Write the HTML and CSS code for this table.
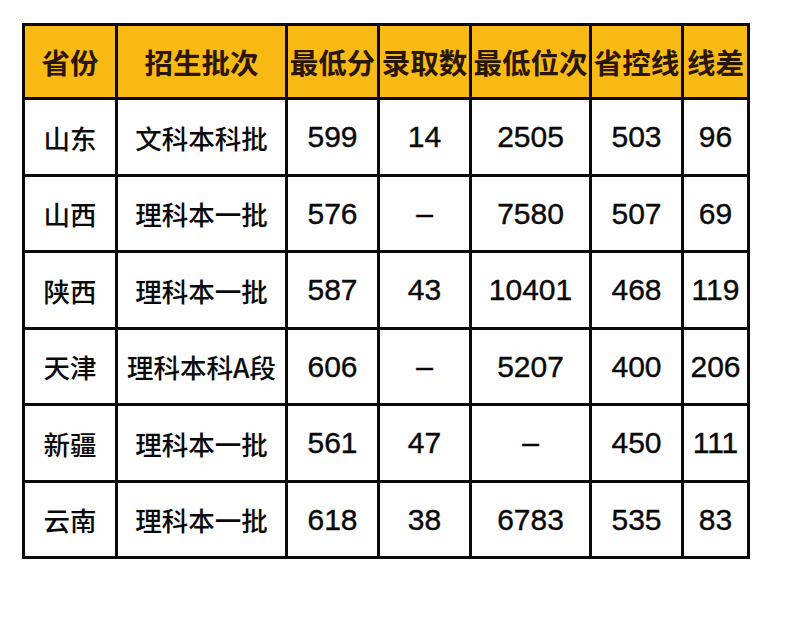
FILE: index.html
```html
<!DOCTYPE html>
<html lang="zh-CN">
<head>
<meta charset="utf-8">
<title>录取分数</title>
<link rel="stylesheet" href="styles.css">
</head>
<body>
<div class="table">
  <div class="cell head">省份</div>
  <div class="cell head">招生批次</div>
  <div class="cell head">最低分</div>
  <div class="cell head">录取数</div>
  <div class="cell head">最低位次</div>
  <div class="cell head">省控线</div>
  <div class="cell head">线差</div>

  <div class="cell cjk">山东</div>
  <div class="cell cjk">文科本科批</div>
  <div class="cell num">599</div>
  <div class="cell num">14</div>
  <div class="cell num">2505</div>
  <div class="cell num">503</div>
  <div class="cell num">96</div>

  <div class="cell cjk">山西</div>
  <div class="cell cjk">理科本一批</div>
  <div class="cell num">576</div>
  <div class="cell num">–</div>
  <div class="cell num">7580</div>
  <div class="cell num">507</div>
  <div class="cell num">69</div>

  <div class="cell cjk">陕西</div>
  <div class="cell cjk">理科本一批</div>
  <div class="cell num">587</div>
  <div class="cell num">43</div>
  <div class="cell num">10401</div>
  <div class="cell num">468</div>
  <div class="cell num">119</div>

  <div class="cell cjk">天津</div>
  <div class="cell cjk">理科本科A段</div>
  <div class="cell num">606</div>
  <div class="cell num">–</div>
  <div class="cell num">5207</div>
  <div class="cell num">400</div>
  <div class="cell num">206</div>

  <div class="cell cjk">新疆</div>
  <div class="cell cjk">理科本一批</div>
  <div class="cell num">561</div>
  <div class="cell num">47</div>
  <div class="cell num">–</div>
  <div class="cell num">450</div>
  <div class="cell num">111</div>

  <div class="cell cjk">云南</div>
  <div class="cell cjk">理科本一批</div>
  <div class="cell num">618</div>
  <div class="cell num">38</div>
  <div class="cell num">6783</div>
  <div class="cell num">535</div>
  <div class="cell num">83</div>
</div>
</body>
</html>
```
FILE: styles.css
```css
html, body {
  margin: 0;
  padding: 0;
  background: #ffffff;
}
body {
  padding: 23px 0 0 22px;
}
.table {
  display: grid;
  width: max-content;
  grid-template-columns: 90px 167px 89px 89px 117px 89px 63px;
  grid-template-rows: 71px 74px 73px 74px 73px 74px 73px;
  gap: 3px;
  padding: 3px;
  background: #0a0a0a;
}
.cell {
  display: flex;
  align-items: center;
  justify-content: center;
  background: #fefefe;
  color: #0a0a0a;
  white-space: nowrap;
}
.head {
  background: #f9ba13;
  color: #2a1606;
  font-family: "Noto Sans CJK SC", "Noto Sans", sans-serif;
  font-weight: 700;
  font-size: 28.5px;
}
.cjk {
  font-family: "Noto Sans CJK SC", "Noto Sans", sans-serif;
  font-weight: 500;
  font-size: 26.5px;
}
.num {
  font-family: "Liberation Sans", Arial, sans-serif;
  font-size: 30px;
  -webkit-text-stroke: 0.4px #0a0a0a;
}
```
